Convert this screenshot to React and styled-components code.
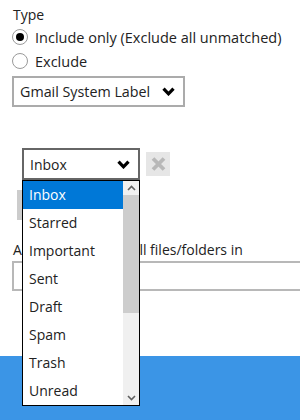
import styled, { createGlobalStyle } from 'styled-components';

const GlobalStyle = createGlobalStyle`
  html, body {
    margin: 0;
    padding: 0;
    background: #fff;
    overflow: hidden;
  }
  body {
    font-family: "Open Sans", "DejaVu Sans", sans-serif;
    font-size: 14px;
    color: #222;
  }
`;

const Page = styled.div`
  width: 300px;
  height: 420px;
  display: flex;
  flex-direction: column;
  overflow: hidden;
`;

const Body = styled.div`
  display: flex;
  flex-direction: column;
  align-items: flex-start;
  padding-left: 12px;
`;

const Label = styled.div`
  line-height: 20px;
  margin-top: ${(p) => p.$top || 0}px;
  padding-left: 1px;
  white-space: nowrap;
`;

const RadioRow = styled.label`
  display: flex;
  align-items: center;
  gap: 7px;
  height: 24px;
  font-size: 14.5px;
  white-space: nowrap;
`;

const RadioDot = styled.span`
  width: 14px;
  height: 14px;
  border-radius: 50%;
  border: 1px solid #9a9a9a;
  background: #fff;
  display: flex;
  align-items: center;
  justify-content: center;

  &::after {
    content: '';
    width: 8px;
    height: 8px;
    border-radius: 50%;
    background: ${(p) => (p.$checked ? '#000' : 'transparent')};
  }
`;

const Select = styled.div`
  box-sizing: border-box;
  display: flex;
  align-items: center;
  justify-content: space-between;
  width: ${(p) => p.$width}px;
  height: ${(p) => p.$height}px;
  border: 2px solid ${(p) => p.$border};
  padding: 0 8px 0 6px;
  background: #fff;
  margin-top: ${(p) => p.$top || 0}px;
  font-size: ${(p) => p.$size || 14}px;
`;

const FilterRow = styled.div`
  display: flex;
  align-items: center;
  gap: 6px;
  margin: 41px 0 0 10px;
`;

const SelectAnchor = styled.div`
  position: relative;
`;

const ClearButton = styled.div`
  width: 24px;
  height: 24px;
  background: #e6e6e6;
  display: flex;
  align-items: center;
  justify-content: center;
`;

const GreyButton = styled.div`
  width: 90px;
  height: 30px;
  background: #cccccc;
  margin: 10px 0 0 5px;
`;

const TextInput = styled.div`
  box-sizing: border-box;
  width: 300px;
  height: 30px;
  border: 2px solid #b8b8b8;
  margin-top: 1px;
  background: #fff;
`;

const Footer = styled.div`
  flex: 1;
  margin-top: 65px;
  background: #3b95e6;
`;

const Menu = styled.div`
  position: absolute;
  left: 0;
  top: 100%;
  box-sizing: border-box;
  width: 118px;
  height: 226px;
  border: 1px solid #000;
  background: #fff;
  display: flex;
  z-index: 5;
`;

const MenuList = styled.div`
  flex: 1;
  display: flex;
  flex-direction: column;
`;

const MenuItem = styled.div`
  height: 28px;
  line-height: 28px;
  padding-left: 6px;
  background: ${(p) => (p.$active ? '#0078d7' : 'transparent')};
  color: ${(p) => (p.$active ? '#fff' : '#222')};
`;

const Scrollbar = styled.div`
  width: 16px;
  background: #f0f0f0;
  display: flex;
  flex-direction: column;
`;

const ScrollArrow = styled.div`
  height: 14px;
  display: flex;
  align-items: center;
  justify-content: center;
`;

const Thumb = styled.div`
  height: 118px;
  background: #cdcdcd;
`;

const Chevron = () => (
  <svg width="13" height="9" viewBox="0 0 13 9">
    <path d="M1.5 1.6 L6.5 6.8 L11.5 1.6" fill="none" stroke="#000" strokeWidth="3.2" />
  </svg>
);

const SmallArrow = ({ up }) => (
  <svg width="9" height="6" viewBox="0 0 9 6">
    <path
      d={up ? 'M1 5 L4.5 1.5 L8 5' : 'M1 1 L4.5 4.5 L8 1'}
      fill="none"
      stroke="#606060"
      strokeWidth="1.6"
    />
  </svg>
);

const ClearIcon = () => (
  <svg width="15" height="14" viewBox="0 0 15 14">
    <path d="M2 1.5 L13 12.5 M13 1.5 L2 12.5" stroke="#b8b8b8" strokeWidth="3.8" />
  </svg>
);

const labels = ['Inbox', 'Starred', 'Important', 'Sent', 'Draft', 'Spam', 'Trash', 'Unread'];

const App = () => (
  <Page>
    <GlobalStyle />
    <Body>
      <Label $top={5}>Type</Label>
      <RadioRow>
        <RadioDot $checked />
        Include only (Exclude all unmatched)
      </RadioRow>
      <RadioRow>
        <RadioDot />
        Exclude
      </RadioRow>
      <Select $width={173} $height={31} $border="#ababab" $top={3} $size={14.3}>
        Gmail System Label
        <Chevron />
      </Select>

      <FilterRow>
        <SelectAnchor>
          <Select $width={118} $height={32} $border="#666">
            Inbox
            <Chevron />
          </Select>
          <Menu>
            <MenuList>
              {labels.map((l, i) => (
                <MenuItem key={l} $active={i === 0}>{l}</MenuItem>
              ))}
            </MenuList>
            <Scrollbar>
              <ScrollArrow><SmallArrow up /></ScrollArrow>
              <Thumb />
              <div style={{ flex: 1 }} />
              <ScrollArrow><SmallArrow /></ScrollArrow>
            </Scrollbar>
          </Menu>
        </SelectAnchor>
        <ClearButton>
          <ClearIcon />
        </ClearButton>
      </FilterRow>

      <GreyButton />
      <Label $top={20}>Apply this filter to all files/folders in</Label>
      <TextInput />
    </Body>
    <Footer />
  </Page>
);

export default App;
